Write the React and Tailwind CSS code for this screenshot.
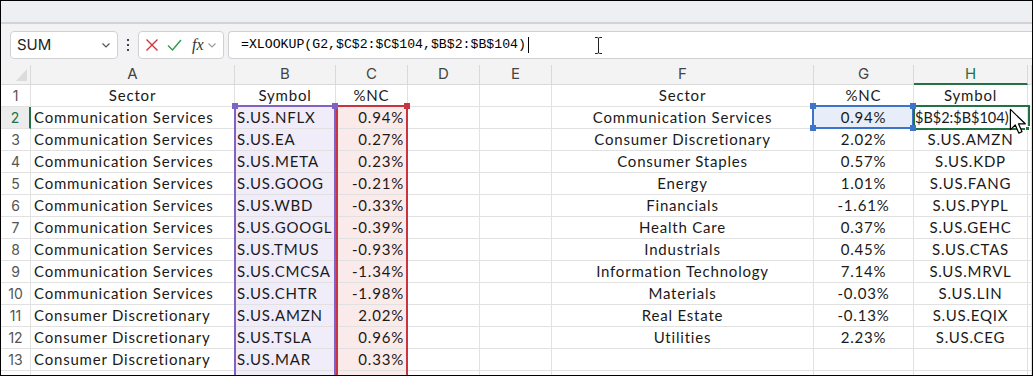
import React from 'react';

const COLS = ['', 'A', 'B', 'C', 'D', 'E', 'F', 'G', 'H', ''];

const left = [
  ['Communication Services', 'S.US.NFLX', '0.94%'],
  ['Communication Services', 'S.US.EA', '0.27%'],
  ['Communication Services', 'S.US.META', '0.23%'],
  ['Communication Services', 'S.US.GOOG', '-0.21%'],
  ['Communication Services', 'S.US.WBD', '-0.33%'],
  ['Communication Services', 'S.US.GOOGL', '-0.39%'],
  ['Communication Services', 'S.US.TMUS', '-0.93%'],
  ['Communication Services', 'S.US.CMCSA', '-1.34%'],
  ['Communication Services', 'S.US.CHTR', '-1.98%'],
  ['Consumer Discretionary', 'S.US.AMZN', '2.02%'],
  ['Consumer Discretionary', 'S.US.TSLA', '0.96%'],
  ['Consumer Discretionary', 'S.US.MAR', '0.33%'],
];

const right = [
  ['Communication Services', '0.94%', ''],
  ['Consumer Discretionary', '2.02%', 'S.US.AMZN'],
  ['Consumer Staples', '0.57%', 'S.US.KDP'],
  ['Energy', '1.01%', 'S.US.FANG'],
  ['Financials', '-1.61%', 'S.US.PYPL'],
  ['Health Care', '0.37%', 'S.US.GEHC'],
  ['Industrials', '0.45%', 'S.US.CTAS'],
  ['Information Technology', '7.14%', 'S.US.MRVL'],
  ['Materials', '-0.03%', 'S.US.LIN'],
  ['Real Estate', '-0.13%', 'S.US.EQIX'],
  ['Utilities', '2.23%', 'S.US.CEG'],
];

const cell = "h-[22px] border-r border-b border-[#e1e1e1] flex items-center overflow-hidden whitespace-nowrap text-[15px] tracking-[0.8px] text-[#1a1a1a] font-['Lato',sans-serif]";

function Row({ n, label, a = '', b = '', c = '', f = '', g = '', h = '', head = false }) {
  const fillB = !head ? 'bg-[#f0ecf9]' : '';
  const fillC = !head ? 'bg-[#fbeaea]' : '';
  const active = n === 2;
  return (
    <>
      <div
        className={`h-[22px] border-b border-[#e1e1e1] flex items-center justify-center text-[14px] font-['Inter',sans-serif] ${
          active ? 'text-[#217346] border-r-2 border-r-[#217346] bg-[#ececec]' : 'text-[#555] border-r'
        }`}
      >
        {label}
      </div>
      <div className={`${cell} ${head ? 'justify-center' : 'pl-[3px]'}`}>{a}</div>
      <div className={`${cell} ${fillB} ${head ? 'justify-center' : 'pl-[2px]'}`}>{b}</div>
      <div className={`${cell} ${fillC} ${head ? 'justify-center' : 'justify-end pr-[3px]'}`}>{c}</div>
      <div className={cell} />
      <div className={cell} />
      <div className={`${cell} justify-center`}>{f}</div>
      <div className={`${cell} justify-center ${active ? 'bg-[#e7eef9]' : ''}`}>{g}</div>
      <div className={`${cell} ${active ? 'justify-start pl-[1px]' : 'justify-center'}`}>
        {active ? <span className="text-[14.5px] tracking-[0px]">{h}</span> : h}
      </div>
      <div className={cell} />
    </>
  );
}

function Sq({ cls }) {
  return <div className={`absolute w-[6px] h-[6px] ${cls}`} />;
}

export default function App() {
  return (
    <div className="w-[1033px] h-[376px] border border-black overflow-hidden bg-white flex flex-col">
      <div className="h-[21px] shrink-0 bg-[#eeeff3]" />
      <div className="h-[2px] shrink-0 bg-[#d2d3d7]" />

      {/* formula bar */}
      <div className="h-[41px] shrink-0 bg-[#f3f3f5] flex items-start pt-[7px] pl-[9px]">
        <div className="w-[108px] h-[28px] bg-white border border-[#d1d1d1] rounded-[4px] flex items-center justify-between pl-[6px] pr-[5px] text-[15px] text-[#222] font-['Inter',sans-serif]">
          <span>SUM</span>
          <svg width="12" height="12" viewBox="0 0 12 12" fill="none" stroke="#555" strokeWidth="1.2">
            <path d="M2.5 4.5 L6 8 L9.5 4.5" />
          </svg>
        </div>
        <div className="w-[20px] h-[28px] flex flex-col items-center justify-center gap-[3px]">
          <div className="w-[2px] h-[2px] bg-[#444]" />
          <div className="w-[2px] h-[2px] bg-[#444]" />
          <div className="w-[2px] h-[2px] bg-[#444]" />
        </div>
        <div className="w-[86px] h-[28px] bg-white border border-[#d1d1d1] rounded-[4px] flex items-center pl-[6px]">
          <svg width="14" height="14" viewBox="0 0 14 14" fill="none" stroke="#d13438" strokeWidth="1.4">
            <path d="M1.5 1.5 L12.5 12.5 M12.5 1.5 L1.5 12.5" />
          </svg>
          <svg className="ml-[8px]" width="15" height="14" viewBox="0 0 15 14" fill="none" stroke="#2f9a4c" strokeWidth="1.4">
            <path d="M1 7.5 L5.5 12 L14 2" />
          </svg>
          <span className="ml-[10px] text-[16px] italic font-['Liberation_Serif',serif] text-[#333] leading-none">fx</span>
          <svg className="ml-[3px]" width="10" height="10" viewBox="0 0 10 10" fill="none" stroke="#999" strokeWidth="1.1">
            <path d="M1.5 3.5 L5 7 L8.5 3.5" />
          </svg>
        </div>
        <div className="ml-[4px] flex-1 h-[28px] bg-white border border-r-0 border-[#d1d1d1] rounded-l-[4px] flex items-center pl-[12px] relative">
          <span className="text-[13.2px] text-black font-['Liberation_Mono',monospace]">=XLOOKUP(G2,$C$2:$C$104,$B$2:$B$104)</span>
          <div className="w-[1px] h-[16px] bg-black ml-[2px]" />
          <svg className="absolute left-[365px] top-[5px]" width="9" height="17" viewBox="0 0 9 17" fill="none" stroke="#222" strokeWidth="1">
            <path d="M1 0.5 H3.5 Q4.5 0.5 4.5 2 V15 Q4.5 16.5 3.5 16.5 H1 M8 0.5 H5.5 Q4.5 0.5 4.5 2 M8 16.5 H5.5 Q4.5 16.5 4.5 15" />
          </svg>
        </div>
      </div>

      {/* grid */}
      <div className="relative flex-1">
        <div className="grid grid-cols-[30px_204px_101px_72px_72px_72px_262px_100px_114px_1fr]">
          {COLS.map((c, i) => (
            <div
              key={i}
              className={`h-[20px] bg-[#f3f3f3] border-r border-b border-[#d9d9d9] flex items-center justify-center text-[15px] font-['Inter',sans-serif] ${
                c === 'H' ? 'bg-[#e2e2e2] text-[#217346] border-b-2 border-b-[#217346]' : 'text-[#444]'
              } ${i === 0 ? 'relative' : ''}`}
            >
              {i === 0 ? (
                <svg className="absolute right-[3px] bottom-[3px]" width="11" height="12" viewBox="0 0 11 12">
                  <polygon points="11,0 11,12 0,12" fill="#dcdcdc" />
                </svg>
              ) : (
                c
              )}
            </div>
          ))}
          <Row n={1} label="1" head a="Sector" b="Symbol" c="%NC" f="Sector" g="%NC" h="Symbol" />
          {Array.from({ length: 13 }).map((_, i) => {
            const L = left[i] || ['', '', ''];
            const R = right[i] || ['', '', ''];
            const h = i === 0 ? '$B$2:$B$104)' : R[2];
            const label = i < 12 ? String(i + 2) : '';
            return <Row key={i} n={i + 2} label={label} a={L[0]} b={L[1]} c={L[2]} f={R[0]} g={R[1]} h={h} />;
          })}
        </div>

        {/* range highlights */}
        <div className="absolute left-[233px] top-[40px] w-[102px] h-[300px] border-2 border-[#8062c4]" />
        <div className="absolute left-[335px] top-[40px] w-[72px] h-[300px] border-2 border-[#c8343f]" />
        <div className="absolute left-[811px] top-[40px] w-[102px] h-[24px] border-2 border-[#3b74c8]" />
        <div className="absolute left-[912px] top-[40px] w-[117px] h-[25px] border-2 border-[#217346]" />
        <Sq cls="left-[231px] top-[38px] bg-[#8062c4]" />
        <Sq cls="left-[331px] top-[38px] bg-[#8062c4]" />
        <Sq cls="left-[403px] top-[38px] bg-[#c8343f]" />
        <Sq cls="left-[809px] top-[38px] bg-[#3b74c8]" />
        <Sq cls="left-[909px] top-[38px] bg-[#3b74c8]" />
        <Sq cls="left-[809px] top-[60px] bg-[#3b74c8]" />
        <Sq cls="left-[909px] top-[60px] bg-[#3b74c8]" />
        <div className="absolute left-[1024px] top-[61px] w-[5px] h-[5px] bg-[#217346] border border-white" />

        {/* mouse pointer */}
        <svg className="absolute left-[1008px] top-[43px]" width="19" height="27" viewBox="0 0 14 20">
          <path d="M1 1 L1 16 L4.6 12.6 L7.2 18.6 L9.6 17.6 L7 11.7 L12 11.7 Z" fill="#fff" stroke="#000" strokeWidth="0.9" strokeLinejoin="round" />
        </svg>
      </div>
    </div>
  );
}
